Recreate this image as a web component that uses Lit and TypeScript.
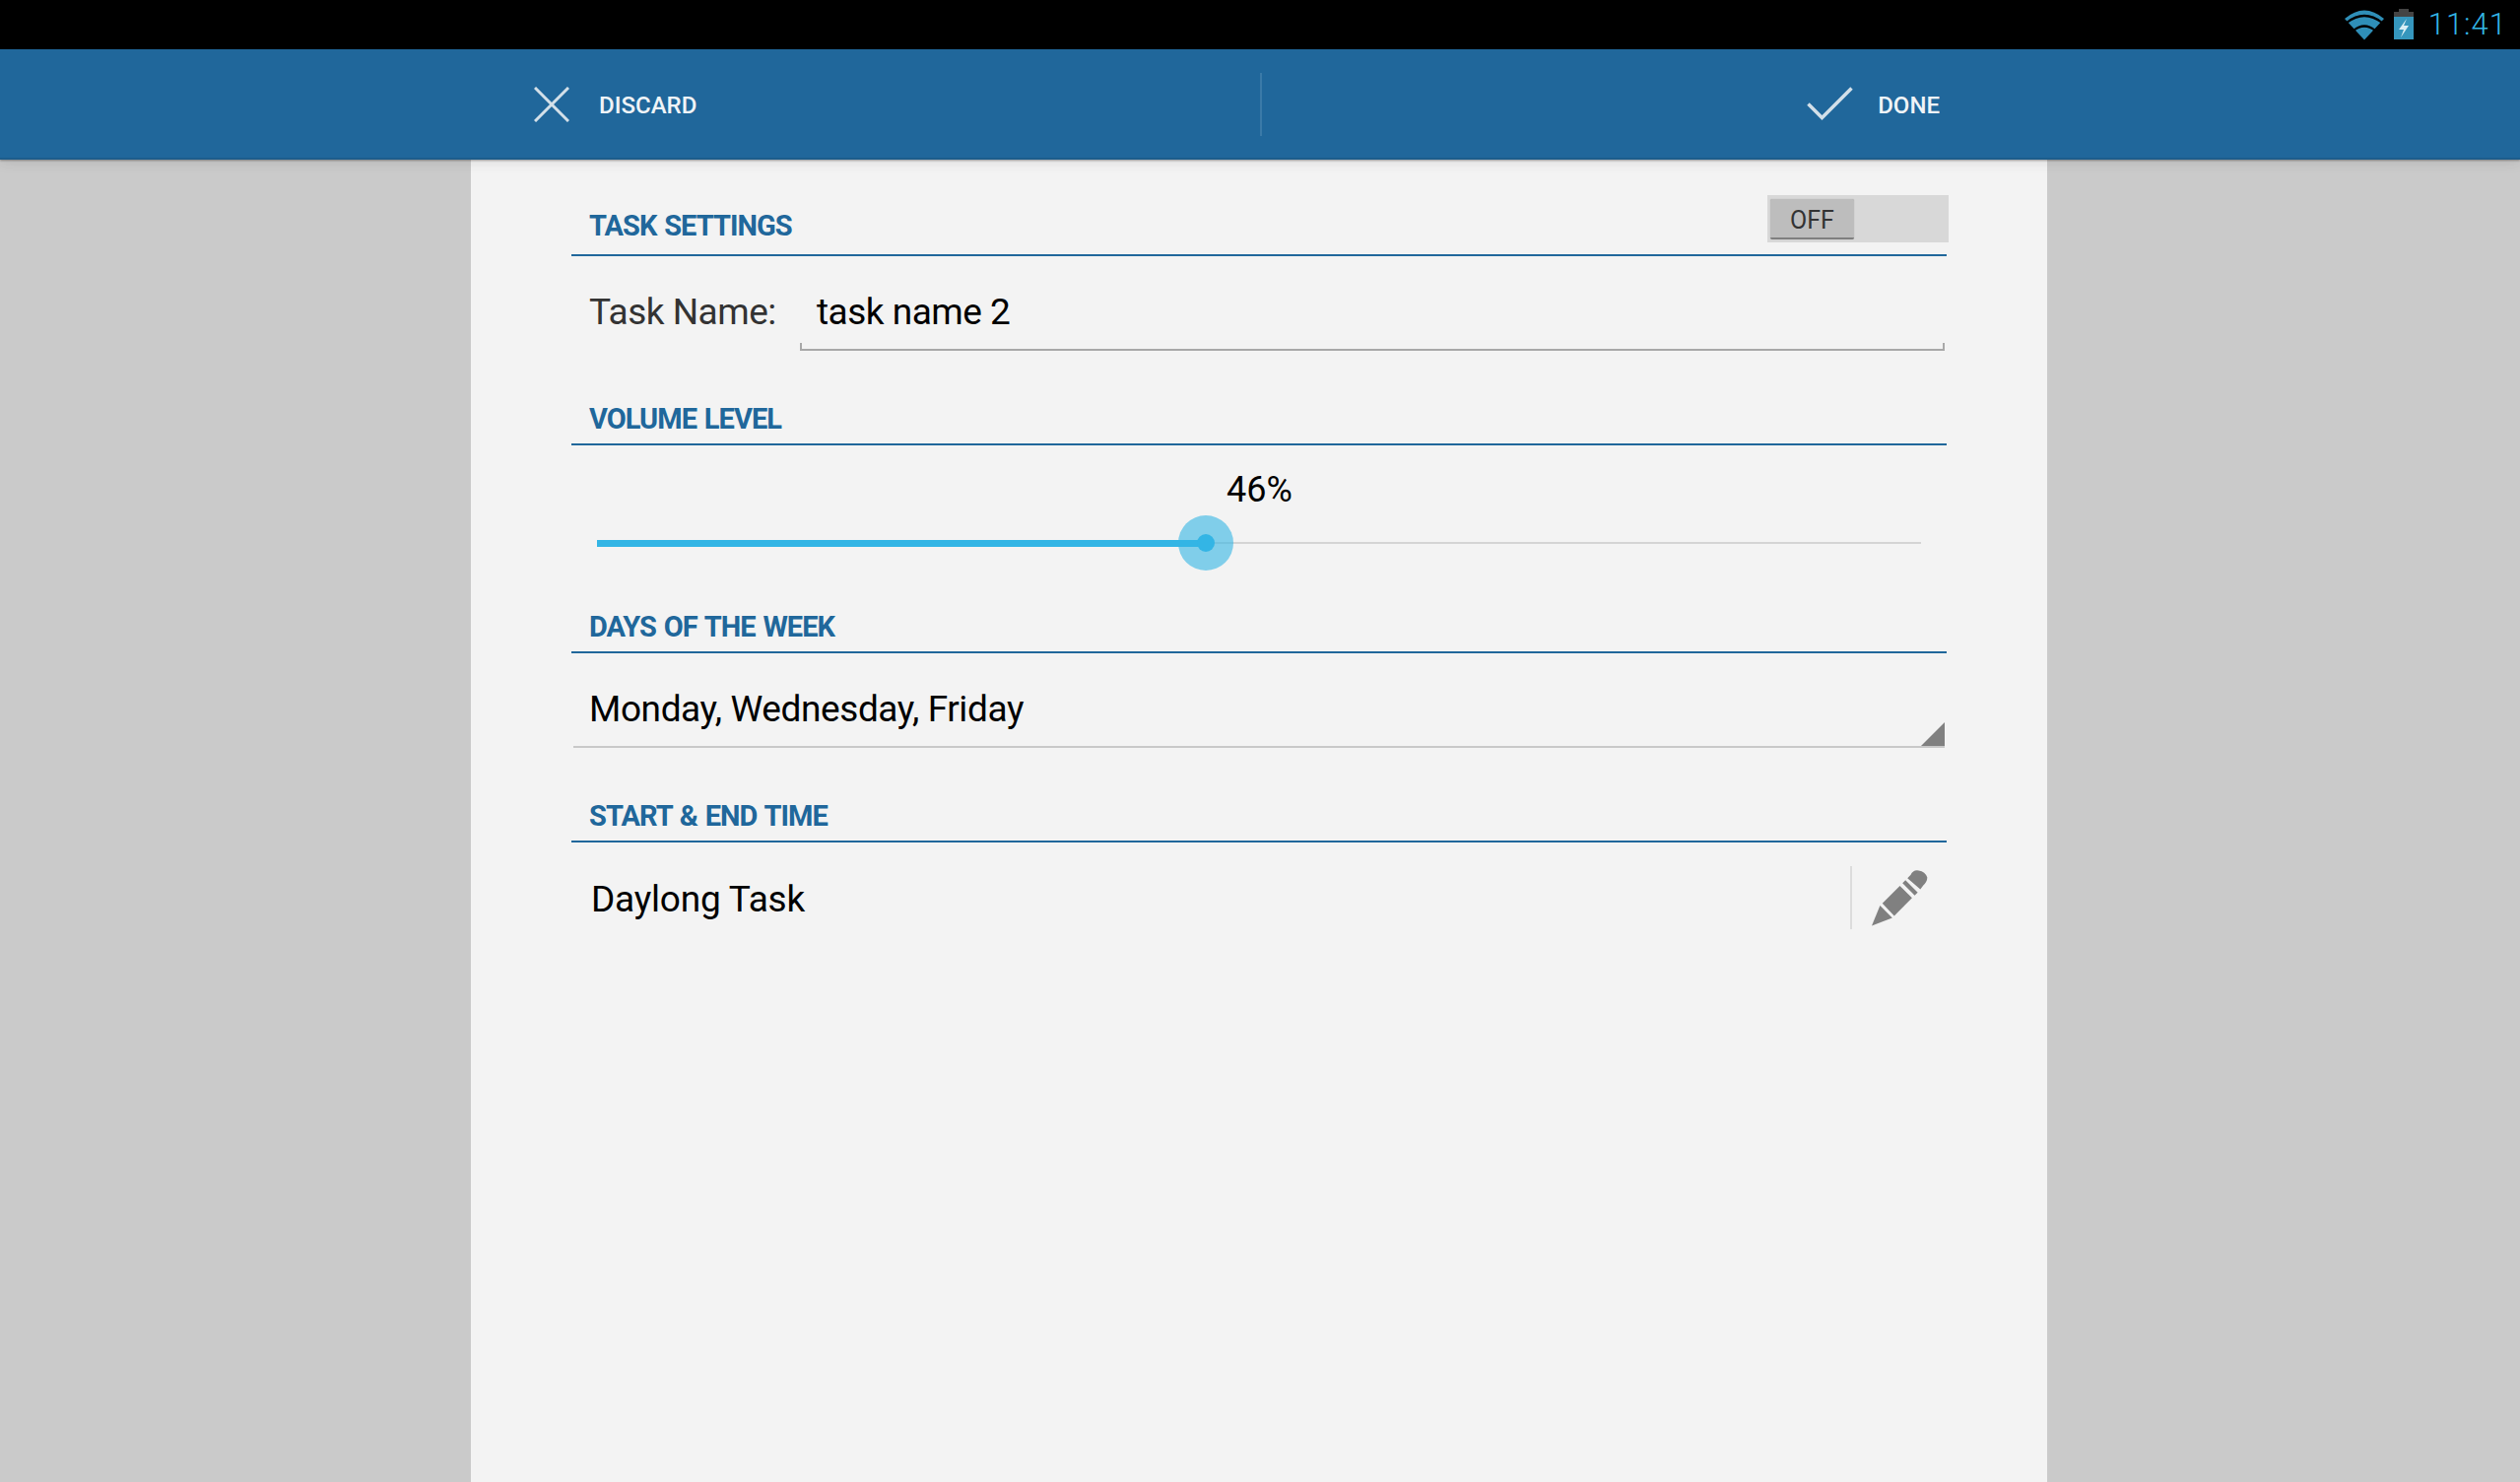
import { LitElement, html, css } from "lit";
import { customElement } from "lit/decorators.js";

@customElement("app-root")
export class AppRoot extends LitElement {
  static styles = css`
    :host { display: flex; flex-direction: column; height: 1504px; width: 2558px; overflow: hidden; background: #cacaca; font-family: Roboto, "Liberation Sans", sans-serif; }
    .status { height: 50px; flex: none; background: #000; display: flex; align-items: flex-start; justify-content: flex-end; color: #33b5e5; }
    .wifi { width: 40px; height: 31px; margin-top: 10px; }
    .batt { width: 21px; height: 32px; margin: 9px 0 0 10px; }
    .time { font-size: 31px; font-weight: 300; line-height: 50px; letter-spacing: 1px; margin: 0 13px 0 14px; }
    .bar { height: 112px; flex: none; background: #20679b; border-bottom: 2px solid #1d5d8c; box-sizing: border-box; padding: 2px 2px 0 0; position: relative; z-index: 2; box-shadow: 0 1px 2px rgba(0,0,0,.35), 0 4px 12px rgba(0,0,0,.08); display: flex; justify-content: center; }
    .bar-in { width: 1600px; display: flex; align-items: center; color: #f0f4f7; font-size: 24px; font-weight: 500; }
    .half { display: flex; align-items: center; height: 64px; box-sizing: border-box; }
    .half span { padding-top: 1px; }
    .left { width: 803px; flex: none; padding-left: 64px; gap: 30px; border-right: 2px solid #3b7aa8; }
    .right { flex: 1; justify-content: flex-end; padding-right: 109px; gap: 25px; }
    .ic { display: block; }
    .ic.x { width: 36px; height: 36px; }
    .ic.check { width: 47px; height: 36px; }
    .main { flex: 1; display: flex; justify-content: center; padding-right: 2px; }
    .sheet { width: 1600px; box-sizing: border-box; background: #f3f3f3; padding: 36px 102px 0; }
    .head { box-sizing: border-box; height: 52px; border-bottom: 2px solid #20679b; display: flex; align-items: flex-end; justify-content: space-between; padding: 0 0 10px 18px; color: #20679b; font-size: 29px; font-weight: 700; line-height: 30px; letter-spacing: -0.95px; word-spacing: 1.5px; }
    .head.first { height: 62px; padding-bottom: 0; align-items: stretch; }
    .head.first .t { align-self: flex-end; padding-bottom: 14px; }
    .toggle { align-self: flex-start; width: 184px; height: 48px; margin-right: -2px; background: #d8d8d8; box-sizing: border-box; padding: 4px 3px; font-size: 25px; font-weight: 400; letter-spacing: 0; word-spacing: 0; color: #333; line-height: 44px; }
    .thumb { width: 85px; height: 41px; background: #bdbdbd; border-radius: 2px; border-bottom: 2px solid #7f7f7f; box-sizing: border-box; text-align: center; box-shadow: 0 0 1px rgba(0,0,0,.3); }
    .row1 { height: 140px; display: flex; align-items: flex-start; box-sizing: border-box; padding: 38px 2px 0 18px; }
    .lbl { font-size: 37px; color: #333; line-height: 38px; width: 214px; letter-spacing: -0.5px; }
    .input { flex: 1; box-sizing: border-box; height: 58px; border-bottom: 2px solid #a8a8a8; position: relative; padding-left: 17px; font-size: 37px; color: #000; line-height: 38px; letter-spacing: -0.5px; }
    .input::before, .input::after { content: ""; position: absolute; bottom: 0; width: 2px; height: 6px; background: #a8a8a8; }
    .input::before { left: 0; }
    .input::after { right: 0; }
    .vol { height: 159px; box-sizing: border-box; padding: 23px 26px 0 26px; }
    .pct { font-size: 36px; color: #000; text-align: center; line-height: 44px; margin-left: 1px; }
    .track { position: relative; height: 2px; background: #d4d4d4; margin-top: 31px; }
    .fill { position: absolute; left: 0; top: -2.5px; height: 7px; background: #33b5e5; }
    .halo { position: absolute; width: 56px; height: 56px; top: -27px; margin-left: -28px; border-radius: 50%; background: rgba(51,181,229,.6); display: flex; align-items: center; justify-content: center; }
    .dot { width: 18px; height: 18px; border-radius: 50%; background: #33b5e5; }
    .spin { height: 96px; margin: 0 2px; box-sizing: border-box; border-bottom: 2px solid #c8c8c8; padding: 28px 0 0 16px; font-size: 37px; color: #000; line-height: 58px; position: relative; letter-spacing: -0.4px; }
    .tri { position: absolute; right: 0; bottom: 0; width: 24px; height: 24px; background: #808080; clip-path: polygon(100% 0, 100% 100%, 0 100%); }
    .gap { height: 44px; }
    .daylong { display: flex; align-items: flex-start; padding: 24px 0 0 20px; font-size: 37px; color: #000; line-height: 58px; letter-spacing: -0.2px; }
    .daylong .name { flex: 1; padding-top: 5px; }
    .sep { width: 2px; height: 64px; background: #dcdcdc; }
    .pencil { width: 57px; height: 58px; margin: 3px 19px 0 20px; display: block; }
  `;
  render() {
    const value = 46;
    return html`
      <div class="status">
        <svg class="wifi" viewBox="0 0 40 31"><path d="M20 30.500L0 9Q20-8 40 9Z" fill="#2f8fb8"/><path d="M2 13Q20 -1 38 13M9 21Q20 12 31 21" fill="none" stroke="#000" stroke-width="2.200"/></svg>
        <svg class="batt" viewBox="0 0 21 32"><path d="M5 0h10v3h5v6H0V3h5z" fill="#444"/><path d="M0 8h20v23H0z" fill="#3596bd"/><path d="M13 10L5 21h5l-3 8 8-12h-5z" fill="#d8eef5"/></svg>
        <div class="time">11:41</div>
      </div>
      <div class="bar"><div class="bar-in">
        <div class="half left">
          <svg class="ic x" viewBox="0 0 36 36"><path d="M1 1L35 35M35 1L1 35" stroke="#d3e0e9" stroke-width="3" fill="none"/></svg>
          <span>DISCARD</span>
        </div>
        <div class="half right">
          <svg class="ic check" viewBox="0 0 47 36"><path d="M1.500 17.500L15.500 31.500L45.500 1.500" stroke="#d3e0e9" stroke-width="3.500" fill="none"/></svg>
          <span>DONE</span>
        </div>
      </div></div>
      <div class="main"><div class="sheet">
        <div class="head first"><span class="t">TASK SETTINGS</span><div class="toggle"><div class="thumb">OFF</div></div></div>
        <div class="row1"><div class="lbl">Task Name:</div><div class="input">task name 2</div></div>
        <div class="head">VOLUME LEVEL</div>
        <div class="vol">
          <div class="pct">${value}%</div>
          <div class="track">
            <div class="fill" style="width:${value}%"></div>
            <div class="halo" style="left:${value}%"><div class="dot"></div></div>
          </div>
        </div>
        <div class="head">DAYS OF THE WEEK</div>
        <div class="spin">Monday, Wednesday, Friday<div class="tri"></div></div>
        <div class="gap"></div>
        <div class="head">START &amp; END TIME</div>
        <div class="daylong">
          <div class="name">Daylong Task</div>
          <div class="sep"></div>
          <svg class="pencil" viewBox="150 545 170 172">
            <path fill="#808080" d="M150 716L175 655L212 692Z"/>
            <path fill="#808080" d="M182 648L235 595L272 632L218 686Z"/>
            <path fill="#808080" d="M243 587L252 578L289 615L280 624Z"/>
            <path fill="#808080" d="M258 572L268 562Q275 546 292 549Q312 552 318 570Q318 582 306 594L297 606Z"/>
          </svg>
        </div>
      </div></div>
    `;
  }
}
